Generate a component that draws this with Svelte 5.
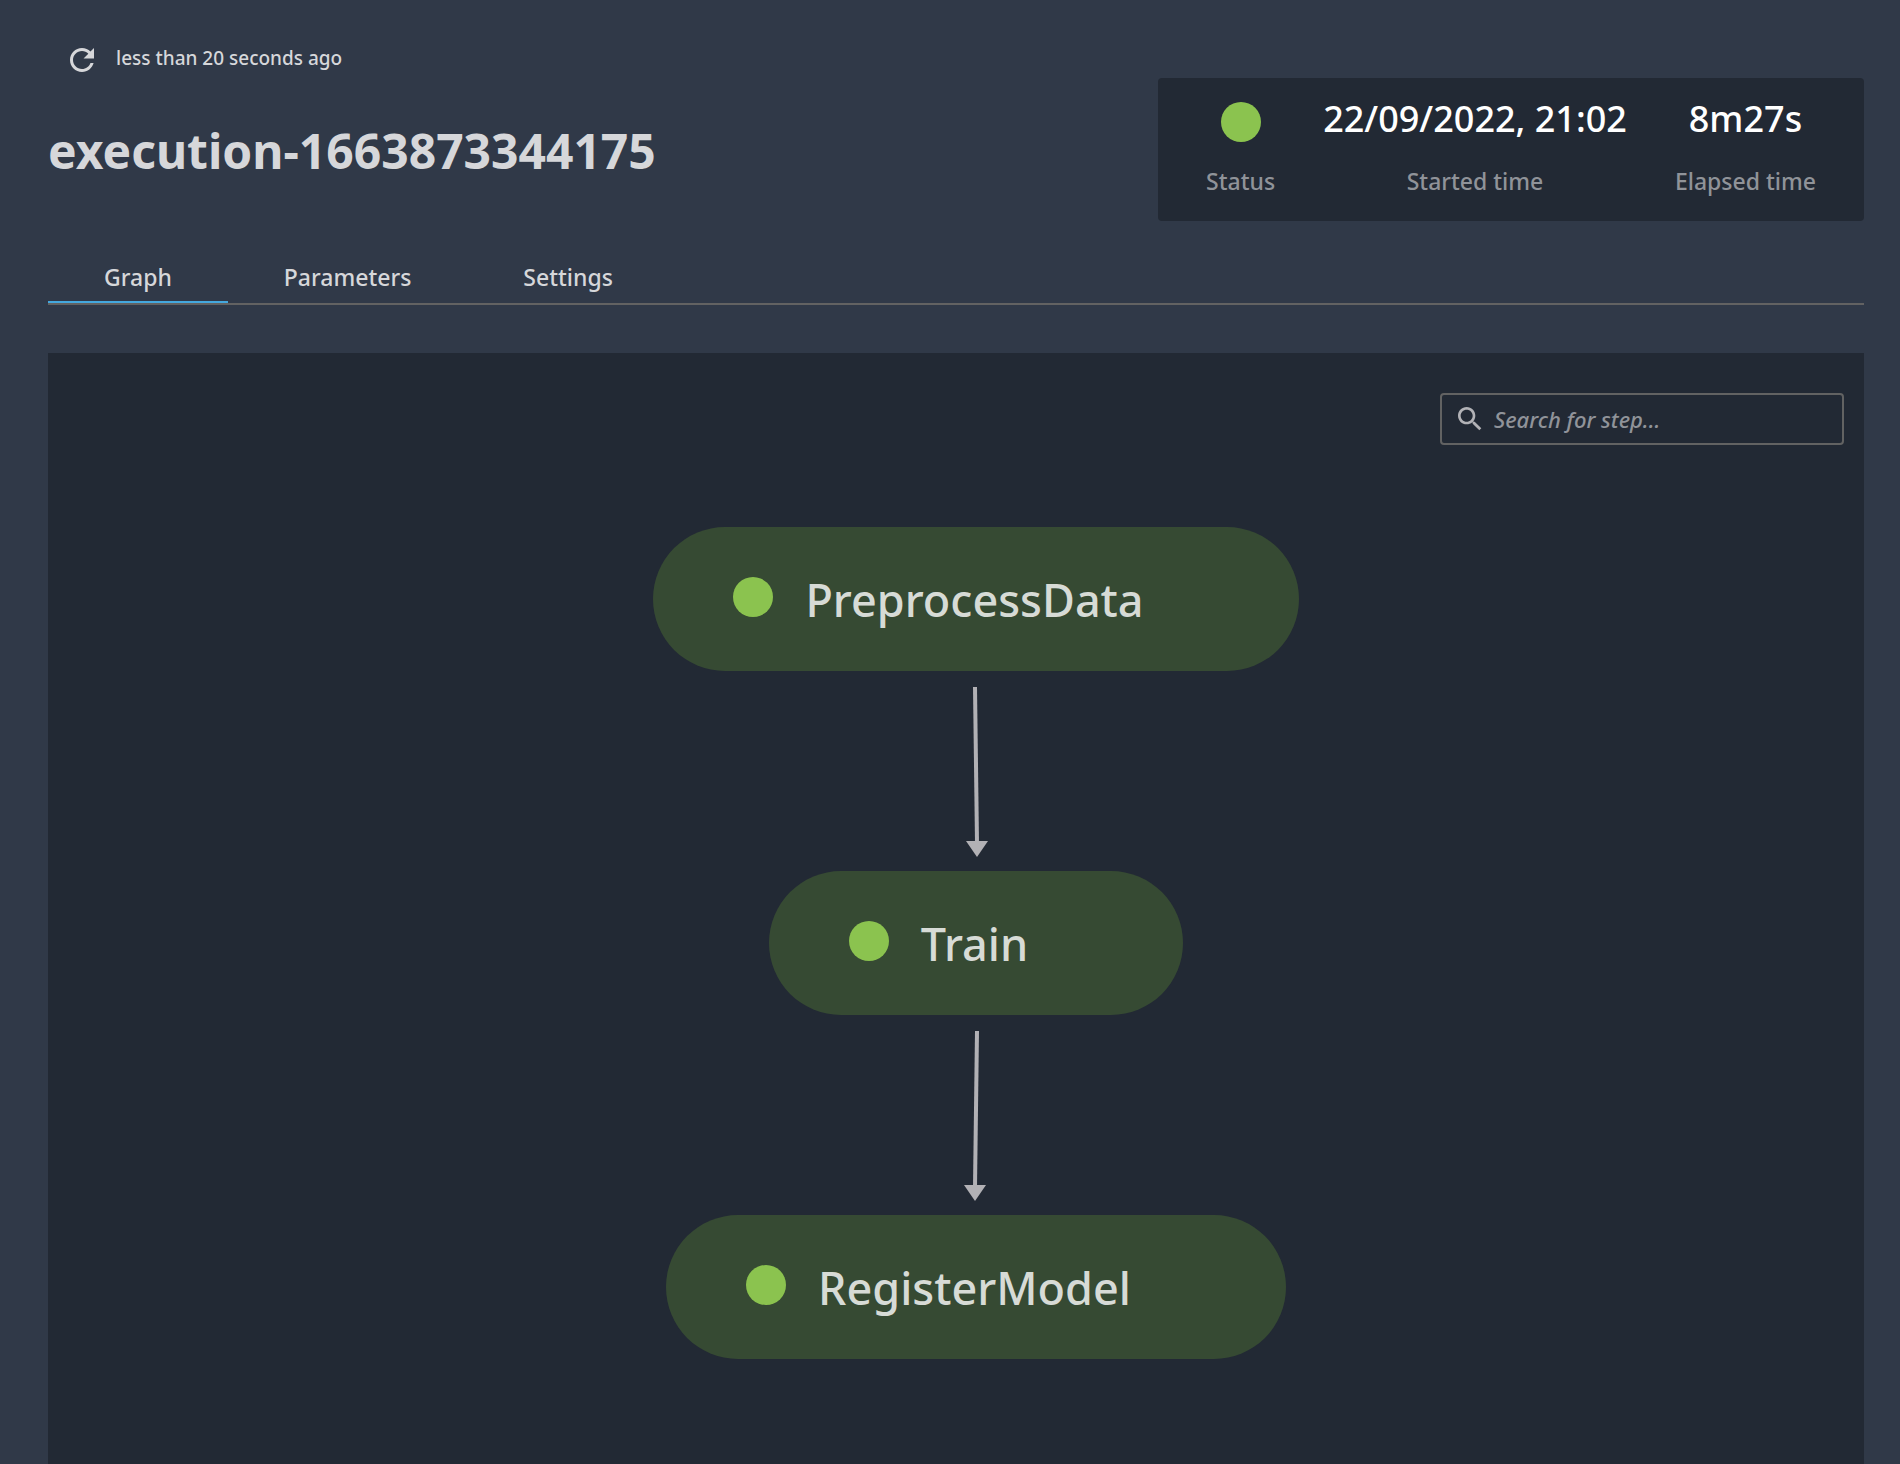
<script>
  let query = $state('');
  let active = $state('Graph');
  const tabs = ['Graph', 'Parameters', 'Settings'];
  const steps = [
    { name: 'PreprocessData', from: 12, to: 14 },
    { name: 'Train', from: 14, to: 12 },
    { name: 'RegisterModel' }
  ];
</script>

<main class="page">
  <header class="top">
    <div class="heading">
      <div class="refresh">
        <button class="icon-button" aria-label="Refresh">
          <svg viewBox="0 0 24 24" width="36" height="36" aria-hidden="true">
            <path d="M17.65 6.35C16.2 4.9 14.21 4 12 4c-4.42 0-7.99 3.58-7.99 8s3.57 8 7.99 8c3.73 0 6.84-2.55 7.73-6h-2.08c-.82 2.33-3.04 4-5.65 4-3.31 0-6-2.69-6-6s2.69-6 6-6c1.66 0 3.14.69 4.22 1.78L13 11h7V4l-2.35 2.35z" />
          </svg>
        </button>
        <span>less than 20 seconds ago</span>
      </div>
      <h1>execution-1663873344175</h1>
    </div>
    <dl class="summary">
      <div class="stat">
        <dt>Status</dt>
        <dd><span class="dot" role="img" aria-label="Succeeded"></span></dd>
      </div>
      <div class="stat">
        <dt>Started time</dt>
        <dd>22/09/2022, 21:02</dd>
      </div>
      <div class="stat">
        <dt>Elapsed time</dt>
        <dd>8m27s</dd>
      </div>
    </dl>
  </header>

  <div class="tabs" role="tablist">
    {#each tabs as tab}
      <button
        role="tab"
        class="tab"
        class:active={active === tab}
        aria-selected={active === tab}
        onclick={() => (active = tab)}>{tab}</button>
    {/each}
  </div>

  <section class="panel">
    <label class="search">
      <svg viewBox="0 0 24 24" width="32" height="32" aria-hidden="true">
        <path d="M15.5 14h-.79l-.28-.27C15.41 12.59 16 11.11 16 9.5 16 5.91 13.09 3 9.5 3S3 5.91 3 9.5 5.91 16 9.5 16c1.61 0 3.09-.59 4.23-1.57l.27.28v.79l5 4.99L20.49 19l-4.99-5zm-6 0C7.01 14 5 11.99 5 9.5S7.01 5 9.5 5 14 7.01 14 9.5 11.99 14 9.5 14z" />
      </svg>
      <input type="text" placeholder="Search for step..." aria-label="Search for step" bind:value={query} />
    </label>

    <div class="graph">
      {#each steps as step, i}
        <button class="node">
          <span class="dot"></span>
          <span class="name">{step.name}</span>
        </button>
        {#if i < steps.length - 1}
          <svg class="edge" viewBox="0 0 26 170" width="26" height="170" aria-hidden="true">
            <path class="line" d="M{step.from} 0L{step.to} 156" />
            <path d="M{step.to - 11} 154h22l-11 16z" />
          </svg>
        {/if}
      {/each}
    </div>
  </section>
</main>

<style>
  :global(body) {
    background: #303948;
  }

  .page {
    box-sizing: border-box;
    min-height: 100vh;
    display: flex;
    flex-direction: column;
    padding: 32px 36px 0 48px;
    color: #d6d7da;
    font-family: 'Noto Sans', 'Open Sans', sans-serif;
    font-weight: 500;
  }

  button {
    border: 0;
    padding: 0;
    background: none;
    color: inherit;
    font: inherit;
    cursor: pointer;
  }

  svg {
    display: block;
    flex: none;
    fill: currentColor;
  }

  .top {
    display: flex;
    justify-content: space-between;
    align-items: flex-start;
  }

  .refresh {
    display: flex;
    align-items: center;
    gap: 16px;
    padding-left: 16px;
    font-size: 19px;
    line-height: 52px;
  }

  .icon-button {
    padding-top: 4px;
  }

  h1 {
    margin: 32px 0 0;
    font-size: 48px;
    line-height: 70px;
    font-weight: 700;
  }

  .summary {
    display: flex;
    gap: 48px;
    margin: 46px 0 0;
    padding: 16px 48px 20px;
    border-radius: 4px;
    background: #222934;
  }

  .stat {
    display: flex;
    flex-direction: column-reverse;
    align-items: center;
    gap: 20px;
  }

  dt {
    color: #909399;
    font-size: 23px;
    line-height: 39px;
  }

  dd {
    display: flex;
    align-items: center;
    height: 48px;
    margin: 0;
    color: #fff;
    font-size: 36px;
  }

  .dot {
    flex: none;
    width: 40px;
    height: 40px;
    border-radius: 50%;
    background: #8bc34f;
  }

  dd .dot {
    margin-top: 8px;
  }

  .tabs {
    display: flex;
    margin-top: 32px;
    border-bottom: 2px solid #626262;
  }

  .tab {
    padding: 0 56px;
    border-bottom: 2px solid transparent;
    font-size: 23px;
    line-height: 48px;
  }

  .tab.active {
    border-bottom-color: #44a8de;
  }

  .panel {
    flex: 1;
    display: flex;
    flex-direction: column;
    margin-top: 48px;
    padding: 40px 20px;
    background: #222934;
  }

  .search {
    box-sizing: border-box;
    align-self: flex-end;
    display: flex;
    align-items: center;
    gap: 8px;
    width: 404px;
    height: 52px;
    padding: 0 12px;
    border: 2px solid #626262;
    border-radius: 4px;
    color: #b2b2b6;
  }

  input {
    flex: 1;
    min-width: 0;
    padding: 0;
    border: 0;
    outline: 0;
    background: none;
    color: #d6d7da;
    font: inherit;
    font-size: 22px;
  }

  input::placeholder {
    color: #909399;
    font-style: italic;
    opacity: 1;
  }

  .graph {
    display: flex;
    flex-direction: column;
    align-items: center;
    margin-top: 82px;
    padding-left: 40px;
  }

  .node {
    display: flex;
    align-items: center;
    gap: 32px;
    height: 144px;
    padding: 0 155px 4px 80px;
    border-radius: 72px;
    background: #364a33;
    color: #d7dbd6;
    font-size: 45px;
  }

  .name {
    padding-top: 4px;
  }

  .edge {
    margin: 16px 0 14px;
    color: #b2b1b5;
  }

  .line {
    fill: none;
    stroke: currentColor;
    stroke-width: 4;
  }
</style>
